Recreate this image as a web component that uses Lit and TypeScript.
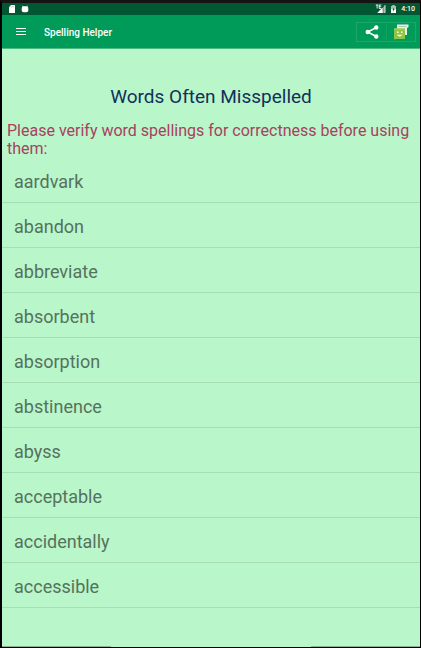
import { LitElement, html, css } from "lit";
import { customElement, property } from "lit/decorators.js";

const WORDS = [
  "aardvark", "abandon", "abbreviate", "absorbent", "absorption",
  "abstinence", "abyss", "acceptable", "accidentally", "accessible",
];

@customElement("status-bar")
class StatusBar extends LitElement {
  @property() time = "";

  static styles = css`
    :host {
      display: flex;
      align-items: center;
      height: 12px;
      padding: 0 5px 0 6px;
      background: #005731;
      color: #fff;
      font-size: 7px;
      font-weight: 500;
    }
    .group { display: flex; align-items: center; gap: 5px; }
    .end { margin-left: auto; gap: 4px; }
    svg { display: block; }
  `;

  render() {
    return html`
      <div class="group">
        <svg width="8" height="10" viewBox="0 0 8 10" fill="#fff" aria-hidden="true">
          <path d="M3 1h3.500q.5 0 .5.5v7q0 .5-.5.5h-5q-.5 0-.5-.5V3.200z" />
          <path d="M3.300 2v1.500M4.600 2v1.500M5.900 2v1.500" stroke="#8fb5a3" stroke-width=".5" />
        </svg>
        <svg width="8" height="10" viewBox="0 0 8 10" fill="#fff" aria-hidden="true">
          <path d="M1.600 1.500l.8.700h3.200l.8-.7.300.4-.4.700q1 .600 1 1.700v2.200q0 1.700-2 1.700H2.700q-2 0-2-1.700V4.300q0-1.100 1-1.700l-.4-.7z" />
        </svg>
      </div>
      <div class="group end">
        <svg width="11" height="10" viewBox="0 0 11 10" aria-hidden="true">
          <path d="M10 1.200V9H4.200V7z" fill="#78a18e" />
          <path d="M7.500 3.700V9H2.200z" fill="#fff" />
          <path d="M.8 1h2.600M2.100 1v3.500M6.300 1H4.200v3.500h2.100M4.200 2.700h2" fill="none" stroke="#fff" stroke-width=".9" />
          <path d="M10 1.200V9" stroke="#fff" stroke-width=".8" />
        </svg>
        <svg width="7" height="10" viewBox="0 0 7 10" aria-hidden="true">
          <path d="M2.300 1h2.400v1H6v7H1V2h1.300z" fill="#a5c2b3" />
          <path d="M1 5h5v4H1z" fill="#fff" />
          <path d="M3.900 3.500L2.500 6h.9v1.800L4.700 5.300h-.8z" fill="#005731" />
        </svg>
        <span>${this.time}</span>
      </div>
    `;
  }
}

@customElement("app-bar")
class AppBar extends LitElement {
  @property() heading = "";

  static styles = css`
    :host {
      display: flex;
      align-items: center;
      height: 33px;
      padding: 0 4px 0 10px;
      background: #009b58;
      border-bottom: 1px solid #4dba84;
      color: #fff;
    }
    button {
      display: flex;
      align-items: center;
      justify-content: center;
      margin: 0;
      padding: 0;
      border: 0;
      background: none;
      color: inherit;
      cursor: pointer;
    }
    .menu { width: 18px; height: 24px; }
    h1 {
      flex: 1;
      margin: 0;
      padding: 2px 0 0 14px;
      font-size: 10px;
      line-height: 16px;
      font-weight: 500;
    }
    .actions {
      display: flex;
      align-items: center;
      border: 1px solid #1ba76a;
    }
    .actions button { width: 29px; height: 18px; }
    .actions button + button { border-left: 1px solid #11a263; }
    svg { display: block; }
  `;

  render() {
    return html`
      <button class="menu" aria-label="Open navigation">
        <svg width="10" height="9" viewBox="0 0 10 9">
          <path d="M0 1.500h10M0 4.500h10M0 7.500h10" stroke="#fff" />
        </svg>
      </button>
      <h1>${this.heading}</h1>
      <div class="actions">
        <button aria-label="Share">
          <svg width="14" height="14" viewBox="0 0 14 14">
            <path d="M11.300 2.500L2.700 7l8.600 4.500" fill="none" stroke="#fff" stroke-width="1.500" />
            <g fill="#fff">
              <circle cx="11.300" cy="2.500" r="2.200" />
              <circle cx="2.700" cy="7" r="2.200" />
              <circle cx="11.300" cy="11.500" r="2.200" />
            </g>
          </svg>
        </button>
        <button aria-label="Share with Messaging">
          <svg width="16" height="16" viewBox="0 0 16 16">
            <path d="M4 .5h11.500v2.500l-1.500 1v7h-2V10H4z" fill="#eceeec" />
            <path d="M5.500 2.500h8" stroke="#b9c0bb" />
            <path d="M1 4.500h11V15H3.500L1 15.500z" fill="#8fc545" />
            <path d="M1 4.500h11v1H1z" fill="#a7d55f" />
            <path d="M4 7.500h1.500V9H4zM8 7.500h1.500V9H8z" fill="#fff" />
            <path d="M3.800 10.800q2.900 3.600 5.800 0z" fill="#fff" />
          </svg>
        </button>
      </div>
    `;
  }
}

@customElement("app-root")
class AppRoot extends LitElement {
  static styles = css`
    :host {
      display: flex;
      flex-direction: column;
      box-sizing: border-box;
      min-height: 100vh;
      border: solid #000;
      border-width: 3px 1px 1px 2px;
      border-top-color: #141414;
      background: #b9f6ca;
      font-family: Roboto, "Noto Sans", sans-serif;
    }
    main {
      display: flex;
      flex: 1;
      flex-direction: column;
      padding-top: 35px;
    }
    h2 {
      margin: 0;
      font-size: 19px;
      line-height: 26px;
      font-weight: 400;
      text-align: center;
      color: #12305a;
    }
    .note {
      margin: 0;
      padding: 12px 5px 0;
      font-size: 16px;
      line-height: 18px;
      color: #a84160;
    }
    ul { margin: 0; padding: 0; list-style: none; }
    li {
      padding: 4px 12px 0;
      border-bottom: 1px solid #a6ddb6;
      font-size: 18px;
      line-height: 40px;
      color: #55725d;
    }
    .edge {
      display: flex;
      justify-content: space-between;
      margin-top: auto;
    }
    .edge span { width: 26%; height: 1px; background: #86b594; }
  `;

  render() {
    return html`
      <status-bar time="4:10"></status-bar>
      <app-bar heading="Spelling Helper"></app-bar>
      <main>
        <h2>Words Often Misspelled</h2>
        <p class="note">Please verify word spellings for correctness before using them:</p>
        <ul>${WORDS.map((word) => html`<li>${word}</li>`)}</ul>
        <div class="edge"><span></span><span></span></div>
      </main>
    `;
  }
}
